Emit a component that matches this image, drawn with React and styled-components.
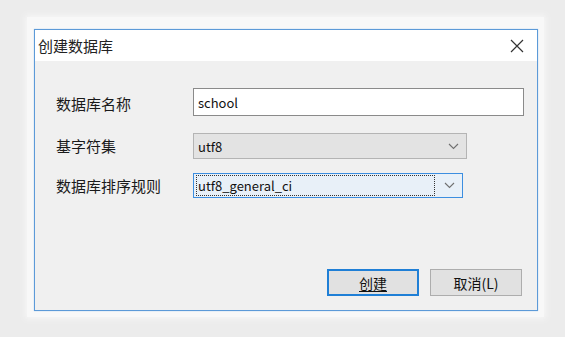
import styled, { createGlobalStyle } from "styled-components";

const GlobalStyle = createGlobalStyle`
  html, body {
    margin: 0;
    padding: 0;
    background: #ececec;
    font-family: "Noto Sans CJK SC", "Noto Sans", sans-serif;
  }
`;

const Page = styled.div`
  width: 565px;
  height: 337px;
  padding: 17px 0 0 27px;
  box-sizing: border-box;
`;

const Frame = styled.div`
  width: 517px;
  height: 300px;
  padding: 12px 7px;
  box-sizing: border-box;
  background: #f8f8f8;
  box-shadow: 0 0 6px 2px #f6f6f6;
`;

const Dialog = styled.div`
  width: 504px;
  height: 282px;
  box-sizing: border-box;
  border: 1px solid #5c9ad8;
  box-shadow: 0 0 1px #9cc3ea;
  background: #f0f0f0;
  display: flex;
  flex-direction: column;
`;

const TitleBar = styled.div`
  height: 31px;
  background: #fff;
  display: flex;
  align-items: center;
  justify-content: space-between;
  padding: 0 12px 0 3px;
  font-size: 15px;
  color: #222;
`;

const CloseButton = styled.button`
  border: none;
  background: transparent;
  padding: 0;
  width: 16px;
  height: 16px;
  display: flex;
  align-items: center;
  justify-content: center;
`;

const Body = styled.div`
  flex: 1;
  display: flex;
  flex-direction: column;
  padding: 27px 15px 14px 21px;
`;

const Form = styled.div`
  display: grid;
  grid-template-columns: 137px 1fr;
  align-items: center;
  row-gap: 14px;
`;

const Label = styled.div`
  font-size: 15px;
  color: #1a1a1a;
  line-height: 20px;
`;

const TextInput = styled.div`
  width: 331px;
  height: 28px;
  margin-bottom: 3px;
  box-sizing: border-box;
  border: 1px solid #8a8a8a;
  background: #fff;
  padding: 0 4px;
  display: flex;
  align-items: center;
  font-size: 13px;
  color: #111;
`;

const Select = styled.div`
  width: ${(p) => p.$width}px;
  height: ${(p) => (p.$focused ? 25 : 26)}px;
  box-sizing: border-box;
  border: 1px solid ${(p) => (p.$focused ? "#3c8ee0" : "#b4b4b4")};
  background: ${(p) => (p.$focused ? "#e8f0f8" : "#e3e3e3")};
  display: flex;
  align-items: center;
  padding: 0 7px 0 2px;
  font-size: 13px;
  color: #111;
`;

const SelectValue = styled.div`
  flex: 1;
  height: 21px;
  box-sizing: border-box;
  display: flex;
  align-items: center;
  padding-left: 1px;
  margin-right: 9px;
  border: 1px dotted ${(p) => (p.$focused ? "#333" : "transparent")};
`;

const Footer = styled.div`
  margin-top: auto;
  display: flex;
  justify-content: flex-end;
  gap: 11px;
`;

const Button = styled.button`
  width: 92px;
  height: 27px;
  box-sizing: border-box;
  border: ${(p) => (p.$primary ? "2px solid #1f7fd6" : "1px solid #adadad")};
  background: #e1e1e1;
  font-family: inherit;
  font-size: 14px;
  color: #111;
  padding: 0;
  span {
    text-decoration: ${(p) => (p.$primary ? "underline" : "none")};
    text-underline-offset: 2px;
  }
`;

const Chevron = () => (
  <svg width="11" height="7" viewBox="0 0 11 7">
    <path d="M1 1 L5.5 5.5 L10 1" fill="none" stroke="#707070" strokeWidth="1.1" />
  </svg>
);

const CloseIcon = () => (
  <svg width="14" height="14" viewBox="0 0 14 14">
    <path d="M1 1 L13 13 M13 1 L1 13" stroke="#333" strokeWidth="1.2" />
  </svg>
);

export default function App() {
  return (
    <Page>
      <GlobalStyle />
      <Frame>
        <Dialog>
          <TitleBar>
            <span>创建数据库</span>
            <CloseButton>
              <CloseIcon />
            </CloseButton>
          </TitleBar>
          <Body>
            <Form>
              <Label>数据库名称</Label>
              <TextInput>school</TextInput>
              <Label>基字符集</Label>
              <Select $width={274}>
                <SelectValue>utf8</SelectValue>
                <Chevron />
              </Select>
              <Label>数据库排序规则</Label>
              <Select $width={270} $focused>
                <SelectValue $focused>utf8_general_ci</SelectValue>
                <Chevron />
              </Select>
            </Form>
            <Footer>
              <Button $primary>
                <span>创建</span>
              </Button>
              <Button>
                <span>取消(L)</span>
              </Button>
            </Footer>
          </Body>
        </Dialog>
      </Frame>
    </Page>
  );
}
